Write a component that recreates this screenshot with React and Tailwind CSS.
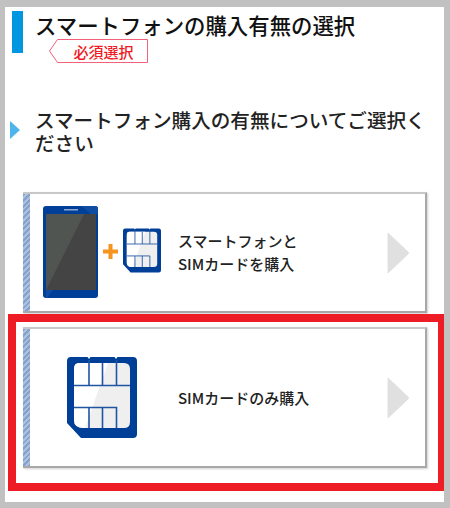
import React from "react"

const stripe = "bg-[repeating-linear-gradient(135deg,#84a2cc_0_2px,#adc1de_2px_4px)]"

function Sim({ className }) {
  return (
    <svg viewBox="0 0 70 81" className={className}>
      {/* body */}
      <path
        d="M4 0H20.5L22 2L23.5 0H47.5L49 2L50.5 0H66Q70 0 70 4V77Q70 81 66 81H14L0 66V4Q0 0 4 0Z"
        fill="#003f98"
      />
      {/* contacts */}
      <path d="M12 6H57Q63 6 63 12V65Q63 71 57 71H17Q7 71 7 63V12Q7 6 12 6Z" fill="#efefef" />
      <path d="M12 6H41L18 71H17Q7 71 7 63V12Q7 6 12 6Z" fill="#ffffff" />
      <g stroke="#1f55a3" strokeWidth="1.6" fill="none">
        <path d="M7 28.5H63" />
        <path d="M7 50.5H49.5V71" />
        <path d="M22 3V28.5M35.5 6V28.5M49.5 3V28.5" />
        <path d="M22 50.5V71M35.5 50.5V71" />
      </g>
    </svg>
  )
}

function Phone({ className }) {
  return (
    <svg viewBox="0 0 55 92" className={className}>
      <rect width="55" height="92" rx="3" fill="#003f98" />
      <path d="M38 0H52Q55 0 55 3V8H48Z" fill="#0f4da3" />
      <rect x="21" y="3" width="14" height="1.5" fill="#8fa9cf" />
      <rect x="3" y="8" width="50" height="76" fill="#444444" />
      <path d="M3 8H41L3 84Z" fill="#515551" />
      <path d="M3 84H10L4 92H3Z" fill="#0f4da3" />
    </svg>
  )
}

function Plus() {
  return (
    <svg viewBox="0 0 15 15" className="h-[15px] w-[15px] shrink-0">
      <path d="M5.5 0H9.5V5.5H15V9.5H9.5V15H5.5V9.5H0V5.5H5.5Z" fill="#f7941d" />
    </svg>
  )
}

function Arrow() {
  return (
    <svg viewBox="0 0 22 42" className="h-[42px] w-[22px] shrink-0">
      <path d="M1 1L21 20Q22 21 21 22L1 41Z" fill="#e0e0e0" stroke="#e0e0e0" strokeLinejoin="round" />
    </svg>
  )
}

function Card({ className, children }) {
  return (
    <div className={"flex items-stretch border-t-2 border-r-2 border-b-2 border-t-[#c8c8c8] border-r-[#a8a8a8] border-b-[#a8a8a8] bg-white shadow-[1px_1px_2px_#d0d0d0] " + className}>
      <div className={"w-[7px] shrink-0 " + stripe}></div>
      {children}
    </div>
  )
}

export default function App() {
  return (
    <div className="h-[508px] w-[450px] overflow-hidden bg-[#c1c1c1] pt-[7px] pr-[6px] pb-[6px] pl-[5px] font-['Noto_Sans_CJK_JP',sans-serif]">
      <div className="h-full bg-white pt-1">
        {/* heading */}
        <div className="flex pl-[7px]">
          <div className="h-[42px] w-[11px] shrink-0 bg-[#0097e0]"></div>
          <div className="ml-[12px]">
            <h1 className="mt-[2px] text-[21.4px] leading-[24px] font-medium whitespace-nowrap text-[#111111]">
              スマートフォンの購入有無の選択
            </h1>
            <div className="relative mt-[2px] ml-[14px] flex h-6 w-[99px] items-center justify-center pl-[10px]">
              <svg viewBox="0 0 99 24" className="absolute inset-0 h-6 w-[99px]">
                <path d="M8.5 .5H98.5V23.5H8.5L.5 12Z" fill="#ffffff" stroke="#f2607a" />
              </svg>
              <span className="relative text-[15px] leading-none font-medium text-[#ee1c25]">必須選択</span>
            </div>
          </div>
        </div>

        {/* question */}
        <div className="mt-[45px] flex items-start pl-[5px]">
          <svg viewBox="0 0 10 18" className="mt-[13px] h-[18px] w-[10px] shrink-0">
            <path d="M0 0L10 9L0 18Z" fill="#4db5ea" />
          </svg>
          <p className="ml-[15px] w-[396px] text-[19.6px] leading-[23px] font-medium text-[#222222]">
            スマートフォン購入の有無についてご選択ください
          </p>
        </div>

        {/* option 1 */}
        <div className="mt-[38px] pl-[18px] pr-[17px]">
          <Card className="h-[121px]">
            <div className="flex items-center pl-[13px] pb-[1px]">
              <Phone className="h-[92px] w-[55px] shrink-0" />
              <span className="mb-[2px] ml-[5px]"><Plus /></span>
              <Sim className="mb-[3px] ml-[5px] h-[45px] w-[38px] shrink-0" />
              <p className="ml-[17px] w-[180px] text-[15px] leading-[23px] font-medium text-[#222222]">
                スマートフォンと<br />SIMカードを購入
              </p>
            </div>
            <div className="ml-auto flex items-center pr-[16px]">
              <Arrow />
            </div>
          </Card>
        </div>

        {/* option 2, outlined */}
        <div className="mt-[1px] ml-[3px] h-[177px] border-[8px] border-r-[6px] border-[#ee1c25] pt-[5px] pl-[7px] pr-[11px]">
          <Card className="h-[141px]">
            <div className="flex items-center pl-[37px]">
              <Sim className="h-[81px] w-[70px] shrink-0" />
              <p className="ml-[41px] text-[15px] leading-[23px] font-medium text-[#222222]">
                SIMカードのみ購入
              </p>
            </div>
            <div className="ml-auto flex items-center pr-[16px]">
              <Arrow />
            </div>
          </Card>
        </div>
      </div>
    </div>
  )
}
